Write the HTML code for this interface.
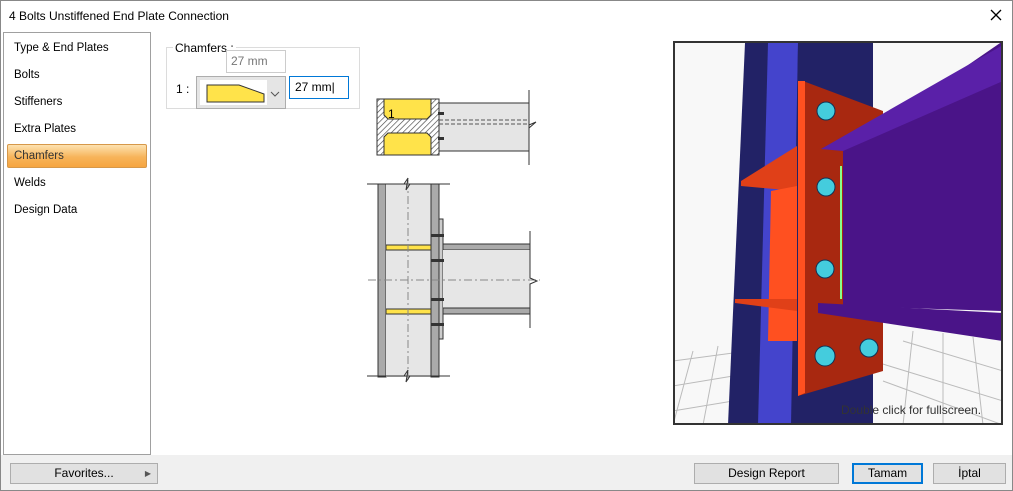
<!DOCTYPE html>
<html><head><meta charset="utf-8"><style>
*{margin:0;padding:0;box-sizing:border-box}
body{width:1013px;height:491px;overflow:hidden;background:#fff;font-family:"Liberation Sans",sans-serif;font-size:12px;color:#000;position:relative}
.abs{position:absolute}
.win{position:absolute;left:0;top:0;width:1013px;height:491px;border:1px solid #888}
.title{left:9px;top:9px;font-size:12px}
.left{left:3px;top:32px;width:148px;height:423px;border:1px solid #a0a0a0;background:#fff}
.item{position:absolute;left:10px;font-size:11.5px}
.sel{position:absolute;left:3px;top:111px;width:140px;height:24px;border:1px solid #d6984a;border-radius:2px;background:linear-gradient(#fde2b0,#f7b45a 55%,#f6a540)}
.bottom{left:1px;top:455px;width:1011px;height:35px;background:#f0f0f0}
.btn{position:absolute;height:21px;border:1px solid #adadad;background:#e1e1e1;text-align:center;line-height:19px;font-size:12px}
</style></head><body>
<div class="win"></div>
<div class="abs title">4 Bolts Unstiffened End Plate Connection</div>
<svg class="abs" style="left:990px;top:9px" width="12" height="12"><path d="M1 1 L11 11 M11 1 L1 11" stroke="#000" stroke-width="1.3"/></svg>
<div class="abs left">
<div class="item" style="top:9px">Type &amp; End Plates</div>
<div class="item" style="top:36px">Bolts</div>
<div class="item" style="top:63px">Stiffeners</div>
<div class="item" style="top:90px">Extra Plates</div>
<div class="sel"></div>
<div class="item" style="top:117px;color:#333">Chamfers</div>
<div class="item" style="top:144px">Welds</div>
<div class="item" style="top:171px">Design Data</div>
</div>
<div class="abs" style="left:166px;top:47px;width:194px;height:62px;border:1px solid #dcdcdc"></div>
<div class="abs" style="left:173px;top:41px;background:#fff;padding:0 2px">Chamfers :</div>
<div class="abs" style="left:226px;top:50px;width:60px;height:23px;border:1px solid #ccc;color:#777;padding:3px 4px;background:#fff">27 mm</div>
<div class="abs" style="left:176px;top:82px">1 :</div>
<div class="abs" style="left:196px;top:76px;width:90px;height:33px;border:1px solid #adadad;background:#e5e5e5">
<div class="abs" style="left:3px;top:3px;width:67px;height:25px;background:#fff"></div>
<svg class="abs" style="left:0;top:0" width="90" height="33"><path d="M10 8 H42 L67 17 V25 H10 Z" fill="#ffe34a" stroke="#333" stroke-width="1"/><path d="M74 15 l4 4 l4 -4" fill="none" stroke="#555"/></svg>
</div>
<div class="abs" style="left:289px;top:76px;width:60px;height:23px;border:1px solid #0078d7;padding:3px 5px">27 mm|</div>
<svg class="abs" style="left:360px;top:90px" width="190" height="300">
<defs><pattern id="h" width="4" height="4" patternUnits="userSpaceOnUse" patternTransform="rotate(45)"><rect width="4" height="4" fill="#fff"/><line x1="0" y1="0" x2="0" y2="4" stroke="#444" stroke-width="1.3"/></pattern></defs>
<rect x="17" y="9" width="62" height="56" fill="url(#h)" stroke="#333"/>
<path d="M24 9 H71 V25 L67 29 H28 L24 25Z" fill="#ffe34a" stroke="#333"/>
<path d="M24 65 H71 V47 L67 43 H28 L24 47Z" fill="#ffe34a" stroke="#333"/>
<text x="28" y="28" font-size="12" font-family="Liberation Sans">1</text>
<rect x="79" y="13" width="90" height="48" fill="#e5e5e5" stroke="#333"/>
<rect x="78" y="22" width="6" height="3" fill="#333"/><rect x="78" y="47" width="6" height="3" fill="#333"/>
<line x1="79" y1="30" x2="168" y2="30" stroke="#555" stroke-dasharray="4 2"/><line x1="79" y1="34" x2="168" y2="34" stroke="#555" stroke-dasharray="4 2"/>
<path d="M169 0 V35 L176 32 L169 38 V75" fill="none" stroke="#333"/>
<g transform="translate(-360,-90)">
<rect x="378" y="184" width="8" height="193" fill="#aaa" stroke="#333"/>
<rect x="386" y="184" width="45" height="193" fill="#e6e6e6"/>
<rect x="431" y="184" width="8" height="193" fill="#aaa" stroke="#333"/>
<line x1="367" y1="184" x2="450" y2="184" stroke="#333"/><line x1="367" y1="376" x2="450" y2="376" stroke="#333"/>
<rect x="386" y="245" width="45" height="5" fill="#ffe34a" stroke="#333"/>
<rect x="386" y="309" width="45" height="5" fill="#ffe34a" stroke="#333"/>
<rect x="439" y="219" width="4" height="120" fill="#ccc" stroke="#333"/>
<rect x="443" y="244" width="87" height="6" fill="#aaa" stroke="#333"/>
<rect x="443" y="250" width="87" height="58" fill="#e6e6e6"/>
<rect x="443" y="308" width="87" height="6" fill="#aaa" stroke="#333"/>
<g fill="#333"><rect x="431" y="234" width="13" height="3"/><rect x="431" y="259" width="13" height="3"/><rect x="431" y="298" width="13" height="3"/><rect x="431" y="323" width="13" height="3"/></g>
<line x1="368" y1="280" x2="540" y2="280" stroke="#888" stroke-dasharray="8 3 2 3"/>
<line x1="408" y1="180" x2="408" y2="380" stroke="#888" stroke-dasharray="8 3 2 3"/>
<path d="M530 231 V278 L537 281 L530 284 V328" fill="none" stroke="#333"/>
<path d="M404 184 l4 -6 l-2 12 l4 -6 M404 376 l4 -6 l-2 12 l4 -6" fill="none" stroke="#333"/>
</g>
</svg>
<div class="abs" style="left:673px;top:41px;width:330px;height:384px;border:2px solid #333;background:#f8f8f8;overflow:hidden">
<svg width="330" height="384" style="position:absolute;left:-2px;top:-2px">
<g stroke="#bbb" fill="none"><path d="M0 320 L60 312 M0 345 L60 335 M0 370 L60 360 M20 310 L0 384 M45 305 L30 384 M230 300 L330 330 M200 320 L330 360 M210 340 L330 384 M240 290 L230 384 M270 292 L270 384 M300 296 L310 384"/></g>
<polygon points="72,2 200,2 200,384 55,384" fill="#222266"/>
<polygon points="95,2 125,2 118,384 85,384" fill="#4444cc"/>
<polygon points="125,2 133,2 128,384 120,384" fill="#222266"/>
<polygon points="68,140 124,105 124,150 68,145" fill="#e04018"/>
<polygon points="98,150 124,145 124,300 95,300" fill="#ff5020"/>
<polygon points="62,258 124,258 124,270 62,262" fill="#e04018"/>
<polygon points="130,40 210,70 210,330 125,355" fill="#a82810"/>
<polygon points="125,40 132,40 132,352 125,355" fill="#ff5020"/>
<polygon points="170,110 330,0 330,270 170,265" fill="#4a1488"/>
<polygon points="148,108 330,4 330,40 170,110" fill="#5a20a8"/>
<polygon points="145,262 330,272 330,300 145,272" fill="#4a1488"/>
<line x1="168" y1="125" x2="168" y2="258" stroke="#8f8" stroke-width="2"/>
<g fill="#44ccdd" stroke="#135"><circle cx="153" cy="70" r="9"/><circle cx="153" cy="146" r="9"/><circle cx="152" cy="228" r="9"/><circle cx="152" cy="315" r="10"/><circle cx="196" cy="307" r="9"/></g>
<text x="168" y="373" font-size="12" fill="#333" font-family="Liberation Sans">Double click for fullscreen.</text>
</svg></div>
<div class="abs bottom"></div>
<div class="btn" style="left:10px;top:463px;width:148px">Favorites... <span style="position:absolute;right:6px;font-size:8px;color:#555">▶</span></div>
<div class="btn" style="left:694px;top:463px;width:145px">Design Report</div>
<div class="btn" style="left:852px;top:463px;width:71px;border:2px solid #0078d7;line-height:17px">Tamam</div>
<div class="btn" style="left:933px;top:463px;width:73px">İptal</div>
</body></html>
